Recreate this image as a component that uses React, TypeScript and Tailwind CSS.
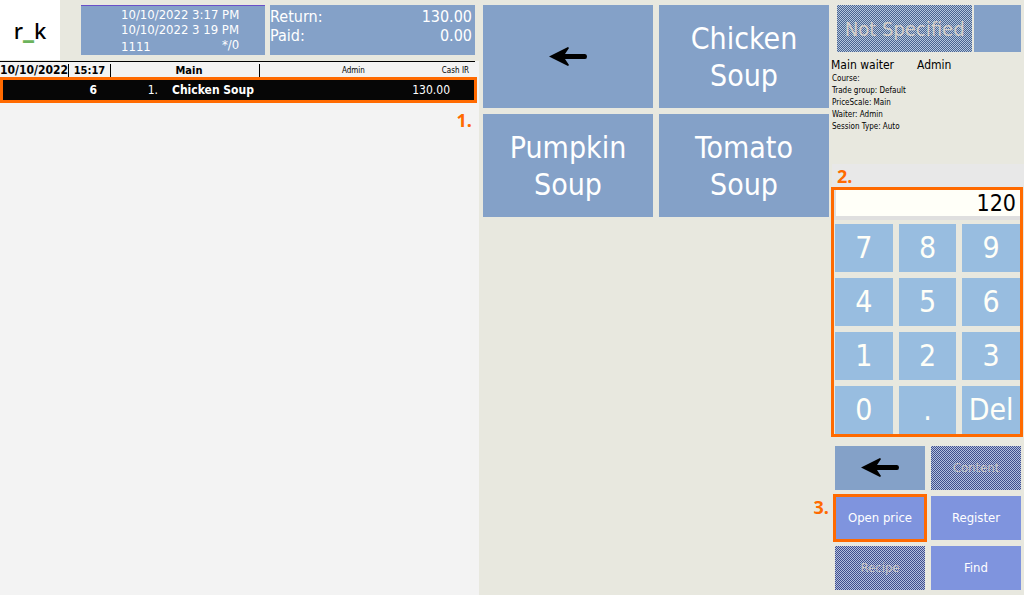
import { useState } from "react";
import type { ReactNode } from "react";
import { clsx } from "clsx";

type Dish = { name: string; lines: string[] };

const dishes: Dish[] = [
  { name: "Chicken Soup", lines: ["Chicken", "Soup"] },
  { name: "Pumpkin Soup", lines: ["Pumpkin", "Soup"] },
  { name: "Tomato Soup", lines: ["Tomato", "Soup"] },
];

const keys = ["7", "8", "9", "4", "5", "6", "1", "2", "3", "0", ".", "Del"];

const sessionInfo = [
  "Course:",
  "Trade group: Default",
  "PriceScale: Main",
  "Waiter: Admin",
  "Session Type: Auto",
];

const hatchBlue =
  "bg-[repeating-conic-gradient(#49648f_0_25%,#b4c6df_0_50%)] bg-[length:2px_2px]";
const hatchViolet =
  "bg-[repeating-conic-gradient(#404f8c_0_25%,#b3bfdf_0_50%)] bg-[length:2px_2px]";

function BackArrow() {
  return (
    <svg width="38" height="20" viewBox="0 0 38 20" aria-hidden="true">
      <path
        d="M0 9.5 L19 0 L20 1 L16 7 H36 Q38 7 38 9.5 Q38 12 36 12 H16 L20 18 L19 19 Z"
        fill="#000"
      />
    </svg>
  );
}

function StepMark({ className, children }: { className?: string; children: ReactNode }) {
  return (
    <span
      className={clsx(
        "font-['Open_Sans','Noto_Sans',sans-serif] text-lg leading-5 font-bold text-[#ff6a00]",
        className,
      )}
    >
      {children}
    </span>
  );
}

function ReceiptPanel() {
  return (
    <section className="flex flex-col">
      <header className="flex h-[61px] items-start pr-1">
        <div className="flex h-[60px] w-[60px] items-center justify-center bg-white font-['Noto_Sans',sans-serif] text-[22px] leading-7 font-medium text-black">
          <span>
            r<span className="font-black text-[#6cb35c]">_</span>k
          </span>
        </div>
        <div className="mt-[5px] ml-[21px] grid h-[50px] flex-1 grid-cols-[184fr_205fr] gap-[5px]">
          <div className="flex border-t border-[#6a50c8] bg-[#84a1c8] pt-px pl-10 text-[13px] leading-[15px] whitespace-nowrap text-white">
            <div>
              <p>10/10/2022 3:17 PM</p>
              <p>10/10/2022 3 19 PM</p>
              <p className="flex justify-between">
                <span className="pt-[2px]">1111</span>
                <span>*/0</span>
              </p>
            </div>
          </div>
          <dl className="grid grid-cols-2 content-start bg-[#84a1c8] pt-[2px] pr-[3px] text-base leading-[19px] text-white">
            <dt>Return:</dt>
            <dd className="text-right">130.00</dd>
            <dt>Paid:</dt>
            <dd className="text-right">0.00</dd>
          </dl>
        </div>
      </header>

      <div className="flex flex-1 flex-col bg-[#f3f3f3]">
        <div className="mr-1 grid h-4 grid-cols-[69px_42px_149fr_215fr] items-end border-t border-black text-[11px] leading-[13px] font-bold text-black">
          <span className="border-r border-black text-xs leading-[13px]">10/10/2022</span>
          <span className="border-r border-black text-center">15:17</span>
          <span className="border-r border-black pl-2 text-center">Main</span>
          <span className="flex items-end justify-between pr-[6px] pl-[82px] text-[8px] font-normal">
            <span>Admin</span>
            <span>Cash IR</span>
          </span>
        </div>
        <div className="relative mr-[2px] border-3 border-[#ff6a00] bg-[#060606]">
          <table className="w-full table-fixed text-xs leading-5 text-white">
            <tbody>
              <tr>
                <td className="w-[95px] pr-px text-right font-bold">6</td>
                <td className="w-[62px] pr-[2px] text-right">1.</td>
                <td className="pl-3 font-bold">Chicken Soup</td>
                <td className="w-[100px] pr-6 text-right">130.00</td>
              </tr>
            </tbody>
          </table>
          <StepMark className="absolute top-[30px] right-[2px]">1.</StepMark>
        </div>
      </div>
    </section>
  );
}

function MenuPanel() {
  const tile =
    "flex h-[103px] flex-col items-center justify-center bg-[#84a1c8] text-[30px] leading-[37px] text-white";

  return (
    <section className="grid grid-cols-2 content-start gap-[6px] pt-[5px] pl-1">
      <button type="button" className={tile} aria-label="Back">
        <BackArrow />
      </button>
      {dishes.map((dish) => (
        <button key={dish.name} type="button" className={tile}>
          {dish.lines.map((line) => (
            <span key={line}>{line}</span>
          ))}
        </button>
      ))}
    </section>
  );
}

function Keypad() {
  const [price, setPrice] = useState("120");

  const press = (key: string) =>
    setPrice((current) => (key === "Del" ? current.slice(0, -1) : current + key));

  return (
    <div className="mr-px ml-[2px] border-3 border-[#ff6a00]">
      <div className="border-b-4 border-l-2 border-[#dfdfdf]">
        <input
          aria-label="Price"
          className="block h-[26px] w-full bg-[#fffff8] pr-1 text-right text-[23px] text-black outline-none"
          value={price}
          onChange={(e) => setPrice(e.target.value)}
        />
      </div>
      <div className="grid grid-cols-3 gap-[6px] pt-1 pl-px">
        {keys.map((key) => (
          <button
            key={key}
            type="button"
            className="h-12 bg-[#98bde0] text-[30px] leading-[48px] text-[#fffff8]"
            onClick={() => press(key)}
          >
            {key}
          </button>
        ))}
      </div>
    </div>
  );
}

function ControlPanel() {
  const action = "h-11 text-[13px]";

  return (
    <section className="flex flex-col">
      <div className="flex h-[52px] gap-[2px] pt-[5px] pr-[3px] pl-2">
        <button
          type="button"
          disabled
          className={clsx(hatchBlue, "flex-[136] text-xl whitespace-nowrap text-[#d2cdc8]")}
        >
          Not Specified
        </button>
        <button type="button" className="flex-[47] bg-[#84a1c8]" aria-label="Select table" />
      </div>

      <div className="h-[112px] pt-[5px] pl-[2px] text-black">
        <p className="flex text-xs leading-4">
          <span className="w-[86px]">Main waiter</span>
          <span>Admin</span>
        </p>
        <ul className="pl-px text-[8px] leading-3">
          {sessionInfo.map((line) => (
            <li key={line}>{line}</li>
          ))}
        </ul>
      </div>

      <div className="ml-[3px] h-[23px] bg-[#e8e8e8] pt-[2px] pl-[5px]">
        <StepMark>2.</StepMark>
      </div>

      <Keypad />

      <div className="grid grid-cols-2 gap-[6px] pt-[9px] pr-[3px] pl-[6px]">
        <button
          type="button"
          className={clsx(action, "flex items-center justify-center bg-[#84a1c8]")}
          aria-label="Back"
        >
          <BackArrow />
        </button>
        <button type="button" disabled className={clsx(action, hatchViolet, "text-[#c4c3c6]")}>
          Content
        </button>
        <div className="relative">
          <button
            type="button"
            className={clsx(
              action,
              "block w-full bg-[#7f94de] text-white outline-3 -outline-offset-1 outline-[#ff6a00]",
            )}
          >
            Open price
          </button>
          <StepMark className="absolute top-px right-full mr-[6px]">3.</StepMark>
        </div>
        <button type="button" className={clsx(action, "bg-[#7f94de] text-white")}>
          Register
        </button>
        <button type="button" disabled className={clsx(action, hatchViolet, "text-[#c4c3c6]")}>
          Recipe
        </button>
        <button type="button" className={clsx(action, "bg-[#7f94de] text-white")}>
          Find
        </button>
      </div>
    </section>
  );
}

export default function App() {
  return (
    <main className="grid min-h-screen grid-cols-[479fr_350fr_195fr] bg-[#e8e8df] font-['DejaVu_Sans_Condensed','Noto_Sans',sans-serif]">
      <ReceiptPanel />
      <MenuPanel />
      <ControlPanel />
    </main>
  );
}
